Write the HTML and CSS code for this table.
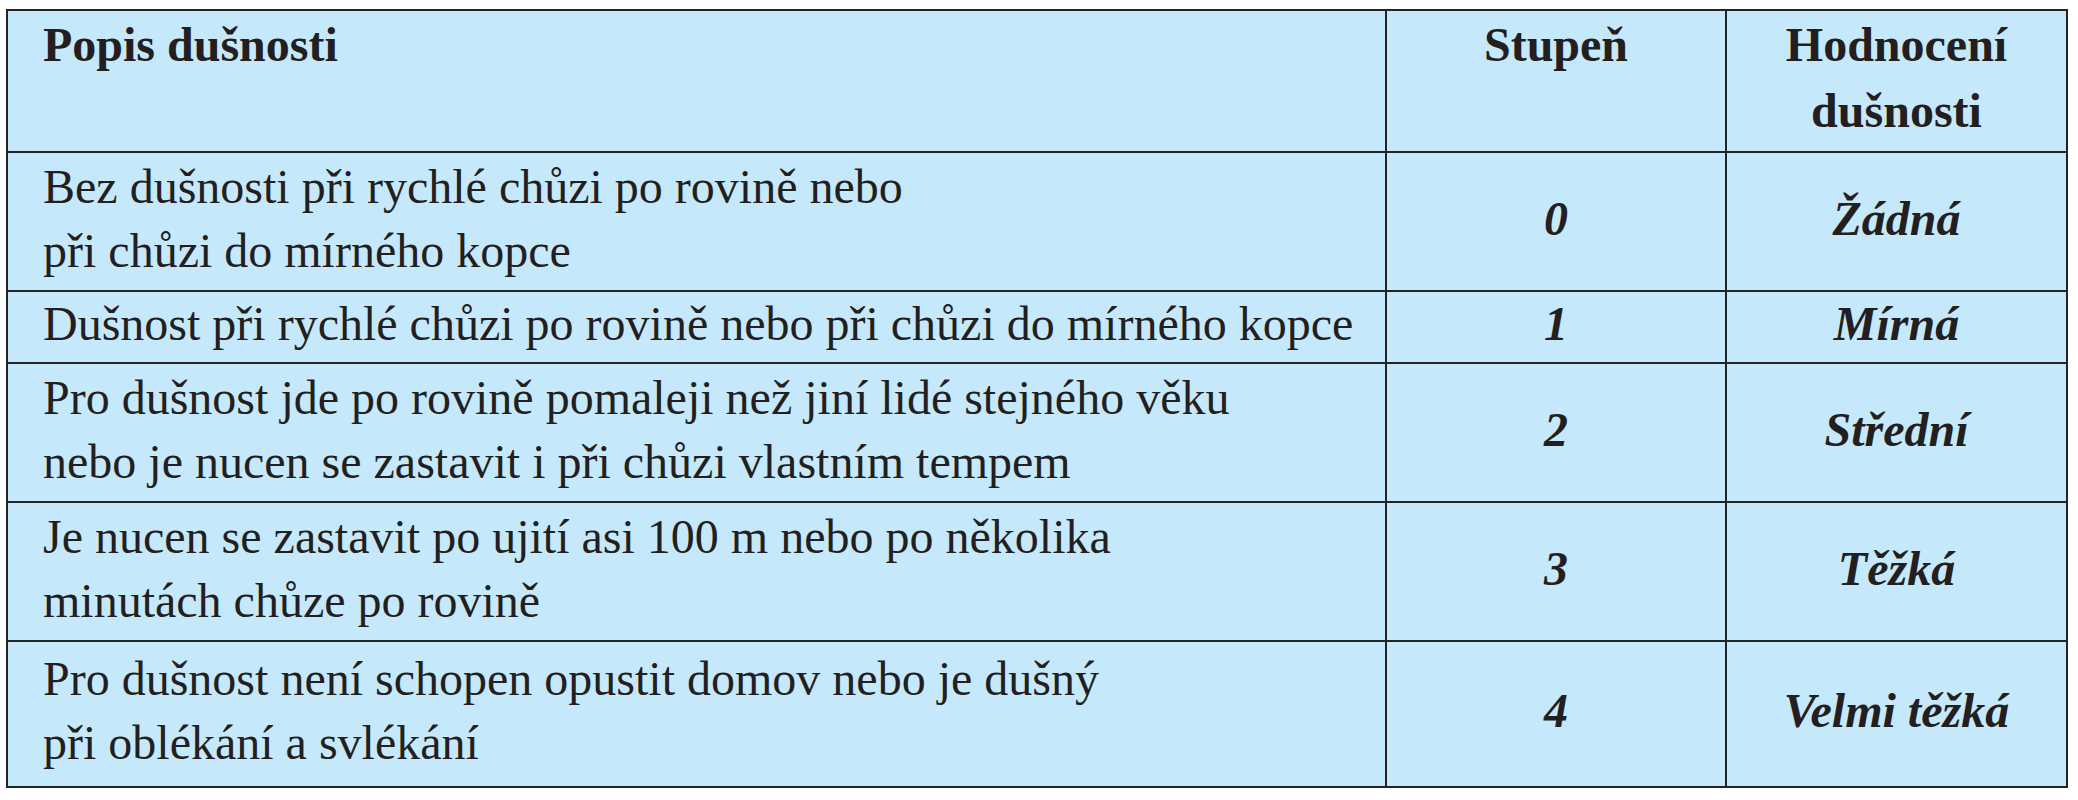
FILE: index.html
```html
<!DOCTYPE html>
<html lang="cs">
<head>
<meta charset="utf-8">
<title>Popis dušnosti</title>
<link rel="stylesheet" href="styles.css">
</head>
<body>
<table class="scale">
  <colgroup>
    <col class="col-desc">
    <col class="col-grade">
    <col class="col-rating">
  </colgroup>
  <thead>
    <tr class="row-head">
      <th class="desc">Popis dušnosti</th>
      <th class="center">Stupeň</th>
      <th class="center head-rating">Hodnocení<br>dušnosti</th>
    </tr>
  </thead>
  <tbody>
    <tr class="row-two">
      <td class="desc">Bez dušnosti při rychlé chůzi po rovině nebo<br>při chůzi do mírného kopce</td>
      <td class="center value">0</td>
      <td class="center value">Žádná</td>
    </tr>
    <tr class="row-one">
      <td class="desc">Dušnost při rychlé chůzi po rovině nebo při chůzi do mírného kopce</td>
      <td class="center value">1</td>
      <td class="center value">Mírná</td>
    </tr>
    <tr class="row-two">
      <td class="desc">Pro dušnost jde po rovině pomaleji než jiní lidé stejného věku<br>nebo je nucen se zastavit i při chůzi vlastním tempem</td>
      <td class="center value">2</td>
      <td class="center value">Střední</td>
    </tr>
    <tr class="row-two">
      <td class="desc">Je nucen se zastavit po ujití asi 100 m nebo po několika<br>minutách chůze po rovině</td>
      <td class="center value">3</td>
      <td class="center value">Těžká</td>
    </tr>
    <tr class="row-last">
      <td class="desc">Pro dušnost není schopen opustit domov nebo je dušný<br>při oblékání a svlékání</td>
      <td class="center value">4</td>
      <td class="center value">Velmi těžká</td>
    </tr>
  </tbody>
</table>
</body>
</html>
```

FILE: styles.css
```css
html, body {
  margin: 0;
  padding: 0;
  background: #ffffff;
}

body {
  padding: 9px 0 0 6px;
  font-family: "Liberation Serif", "Times New Roman", serif;
  color: #231f20;
}

.scale {
  border-collapse: collapse;
  table-layout: fixed;
  width: 2060px;
  background: #c6e8fb;
  font-size: 48px;
  line-height: 64px;
}

.col-desc { width: 1379px; }
.col-grade { width: 340px; }
.col-rating { width: 341px; }

.scale th,
.scale td {
  border: 2px solid #222428;
  padding: 0;
}

.scale th {
  font-weight: bold;
  vertical-align: top;
  padding-top: 1px;
  line-height: 66px;
}

.scale td {
  font-weight: normal;
  vertical-align: middle;
  padding-bottom: 6px;
}

.desc {
  text-align: left;
  padding-left: 35px !important;
}

.center {
  text-align: center;
}

.value {
  font-weight: bold !important;
  font-style: italic;
}

.row-head { height: 142px; }
.row-two { height: 139px; }
.row-one { height: 71px; }
.row-last { height: 146px; }
```
